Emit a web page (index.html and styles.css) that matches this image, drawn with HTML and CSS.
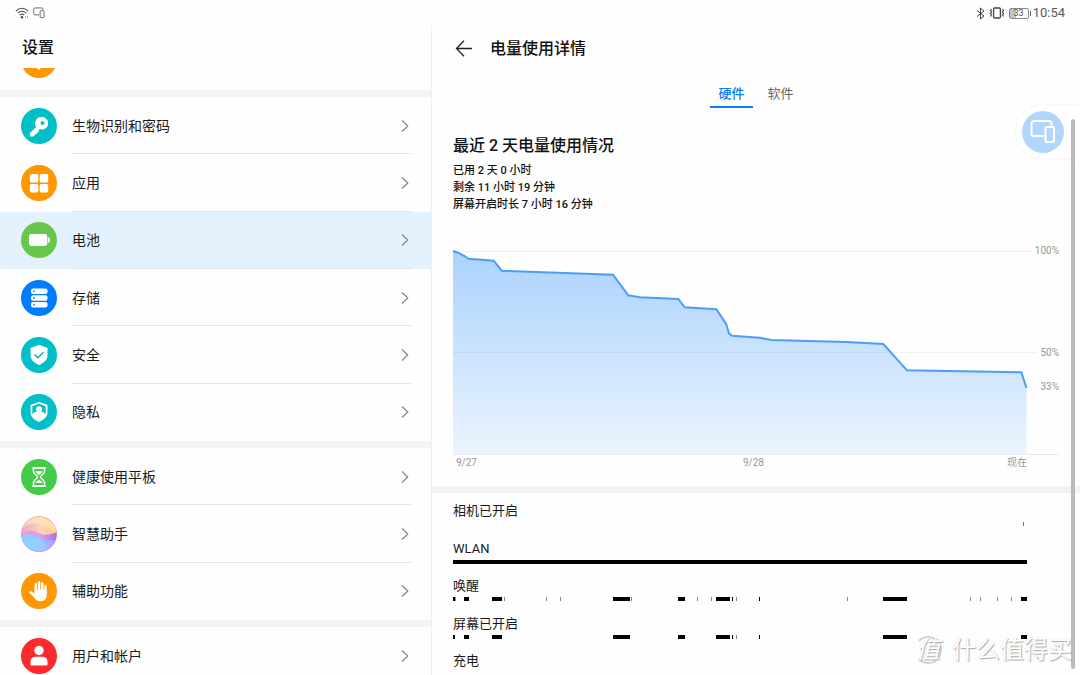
FILE: index.html
```html
<!DOCTYPE html>
<html lang="zh-CN">
<head>
<meta charset="utf-8">
<meta name="viewport" content="width=device-width, initial-scale=1">
<title>设置</title>
<link rel="stylesheet" href="styles.css">
</head>
<body>
<svg class="defs" aria-hidden="true">
  <symbol id="chevron" viewBox="0 0 8 14"><path d="M1 1.5 6.8 7 1 12.5" fill="none" stroke="#858585" stroke-width="1.2"/></symbol>
  <symbol id="devices" viewBox="0 0 26 24"><path d="M21.5 5.500V3.500a2.500 2.500 0 0 0-2.500-2.500H4A2.500 2.500 0 0 0 1.500 3.500v10A2.500 2.500 0 0 0 4 16h9.500M17 7h5.500a1.500 1.500 0 0 1 1.500 1.500v12a1.500 1.500 0 0 1-1.500 1.500H17a1.500 1.500 0 0 1-1.500-1.500v-12A1.500 1.500 0 0 1 17 7z" fill="none" stroke="currentColor"/></symbol>
</svg>

<header class="status">
  <div class="status-side">
    <svg width="14" height="12" viewBox="0 0 14 12"><g fill="none" stroke="#555" stroke-width="1.100"><path d="M.8 4.100Q7-1.600 13.200 4.100M2.800 6.200Q7 2.400 11.200 6.200M4.800 8.200Q7 6.200 9.200 8.200"/></g><circle cx="7" cy="10.300" r="1.200" fill="#444"/><path d="M10.500 9v2M12.500 9v2" stroke="#bbb"/></svg>
    <svg class="mini-devices" width="12" height="12"><use href="#devices"/></svg>
  </div>
  <div class="status-side">
    <svg width="9" height="13" viewBox="0 0 9 13"><path d="M1 3.500 8 9 4.500 12V1L8 4 1 9.500" fill="none" stroke="#444"/></svg>
    <svg width="16" height="12" viewBox="0 0 16 12"><rect x="4.600" y="1" width="6.800" height="10" rx="1" fill="none" stroke="#444" stroke-width="1.300"/><path d="M2.500 2 1.500 3.500l1 1.500-1 1.500 1 1.500-1 1.500M13.500 2l1 1.500-1 1.500 1 1.500-1 1.500 1 1.500" fill="none" stroke="#444" stroke-width="1.200"/></svg>
    <span class="battery"><span class="battery-level">33</span></span>
    <time class="clock">10:54</time>
  </div>
</header>

<div class="panes">
  <nav class="sidebar" aria-label="设置">
    <h1 class="sidebar-title">设置</h1>
    <div class="list">
      <div class="group cut"><svg class="icon" viewBox="0 0 36 36"><circle cx="18" cy="18" r="18" fill="#ff9800"/><path d="M16 26h4l-2 2z" fill="#fff"/></svg></div>
      <div class="group six">
        <a class="item" href="#security"><svg class="icon" viewBox="0 0 36 36"><circle cx="18" cy="18" r="18" fill="#00bfc9"/><path fill="#fff" fill-rule="evenodd" d="M20.500 9a6.200 6.200 0 1 1-1.600 12l-1.300 1.300.3 1.700-1.700.2-.3 1.700-1.700.2-.4 1.500-1.300.8H9.200l-.4-3.200 6.400-6.500A6.200 6.200 0 0 1 20.500 9zm1 4a2 2 0 1 0 0 4 2 2 0 0 0 0-4z"/></svg><span class="label">生物识别和密码</span><svg class="chevron"><use href="#chevron"/></svg></a>
        <a class="item" href="#apps"><svg class="icon" viewBox="0 0 36 36"><circle cx="18" cy="18" r="18" fill="#ff9800"/><g fill="#fff"><rect x="8.800" y="9" width="8.500" height="8.500" rx="1.600"/><rect x="18.700" y="9" width="8.500" height="8.500" rx="1.600"/><rect x="8.800" y="18.900" width="8.500" height="8.500" rx="1.600"/><rect x="18.700" y="18.900" width="8.500" height="8.500" rx="1.600"/></g></svg><span class="label">应用</span><svg class="chevron"><use href="#chevron"/></svg></a>
        <a class="item selected" href="#battery" aria-current="page"><svg class="icon" viewBox="0 0 36 36"><circle cx="18" cy="18" r="18" fill="#66c74c"/><rect x="8" y="12" width="18.300" height="12" rx="2.400" fill="#fff"/><path d="M27 15.200h.8a1 1 0 0 1 1 1v3.600a1 1 0 0 1-1 1H27z" fill="#fff"/></svg><span class="label">电池</span><svg class="chevron"><use href="#chevron"/></svg></a>
        <a class="item" href="#storage"><svg class="icon" viewBox="0 0 36 36"><circle cx="18" cy="18" r="18" fill="#007dff"/><g fill="#fff"><rect x="10" y="8.500" width="16.500" height="5.500" rx="2"/><rect x="10" y="15.300" width="16.500" height="5.500" rx="2"/><rect x="10" y="22.100" width="16.500" height="5.500" rx="2"/></g><g fill="#007dff"><circle cx="13" cy="11.200" r=".9"/><circle cx="13" cy="18" r=".9"/><circle cx="13" cy="24.800" r=".9"/></g></svg><span class="label">存储</span><svg class="chevron"><use href="#chevron"/></svg></a>
        <a class="item" href="#safety"><svg class="icon" viewBox="0 0 36 36"><circle cx="18" cy="18" r="18" fill="#00bfc9"/><path d="M18 7.800 26.500 11v7.500c0 4.500-4 7.500-8.500 9.500-4.500-2-8.500-5-8.500-9.500V11z" fill="#fff"/><path d="m13.500 17.500 3.500 3.300 5.500-5.600" fill="none" stroke="#00a9b3" stroke-width="1.300"/></svg><span class="label">安全</span><svg class="chevron"><use href="#chevron"/></svg></a>
        <a class="item" href="#privacy"><svg class="icon" viewBox="0 0 36 36"><circle cx="18" cy="18" r="18" fill="#00bfc9"/><path d="M18 7.800 26.500 11v7.500c0 4.500-4 7.500-8.500 9.500-4.500-2-8.500-5-8.500-9.500V11z" fill="#fff"/><path d="M18 9.800 24.700 12.200V18l-.2 2.500c-.8-1.600-2.200-2.400-4-2.700h-5c-1.800.3-3.200 1.100-4 2.700l-.2-2.500v-5.800z" fill="#00bfc9"/><circle cx="18" cy="15.300" r="3" fill="#fff"/><path d="M12 23c0-3.500 2.500-4.600 6-4.600s6 1.100 6 4.600z" fill="#fff"/></svg><span class="label">隐私</span><svg class="chevron"><use href="#chevron"/></svg></a>
      </div>
      <div class="group three">
        <a class="item" href="#wellbeing"><svg class="icon" viewBox="0 0 36 36"><circle cx="18" cy="18" r="18" fill="#43cc47"/><path d="M12.500 9h11v3.500c0 2.500-4 3.700-4 5.500s4 3 4 5.500V27h-11v-3.500c0-2.500 4-3.700 4-5.500s-4-3-4-5.500z" fill="none" stroke="#fff" stroke-width="1.500"/><path d="M11.300 8.800h13.400M11.300 27.200h13.400" stroke="#fff" stroke-width="1.800"/><path d="M14.500 12.300h7c-.3 1.600-2.500 2.600-3.500 4-1-1.400-3.200-2.400-3.500-4zM18 20.500c1.500 1.500 3 1.800 3.500 3.500h-7c.5-1.700 2-2 3.500-3.500z" fill="#fff"/></svg><span class="label">健康使用平板</span><svg class="chevron"><use href="#chevron"/></svg></a>
        <a class="item" href="#assistant"><svg class="icon" viewBox="0 0 36 36"><defs><linearGradient id="sky" x2="1"><stop stop-color="#e9a5d5"/><stop offset=".55" stop-color="#ffd3b5"/><stop offset="1" stop-color="#ffc87b"/></linearGradient><linearGradient id="wave" x2="1"><stop stop-color="#f29cc4"/><stop offset=".5" stop-color="#dba0f0"/><stop offset="1" stop-color="#ad6cf0"/></linearGradient><linearGradient id="sea" x2="1"><stop stop-color="#86d4ff"/><stop offset=".5" stop-color="#a3b8ff"/><stop offset="1" stop-color="#aaa2ff"/></linearGradient><clipPath id="orb"><circle cx="18" cy="18" r="17.800"/></clipPath></defs><g clip-path="url(#orb)"><path fill="url(#sky)" d="M0 0h36v36H0z"/><path d="M0 14C8 4 20 5 36 17v-6C26 2 18 0 12 0 6 3 2 7 0 14z" fill="#ffeeb8" opacity=".6"/><path d="M0 18c7-5 13-4 18-1s11 2 18-1v20H0z" fill="url(#wave)"/><path d="M0 20c6-3 12-2 18 1 6 2.500 12 4 18 3v12H0z" fill="url(#sea)"/><path d="M0 29c6-6 12-8 18-7 5 1 8 6 9 14H0z" fill="#8be2ff" opacity=".45"/></g><circle cx="18" cy="18" r="17.500" fill="none" stroke="#c98fae" stroke-opacity=".4"/></svg><span class="label">智慧助手</span><svg class="chevron"><use href="#chevron"/></svg></a>
        <a class="item" href="#accessibility"><svg class="icon" viewBox="0 0 36 36"><circle cx="18" cy="18" r="18" fill="#ff9800"/><path d="M14.800 20V11.200M18.100 18V9.300M21.400 18v-7.500M24.500 20v-6.800" stroke="#fff" stroke-width="2.400" stroke-linecap="round"/><path d="M13.600 16.500h12.100v5.500c0 4-2.300 6.200-6 6.200-3 0-4.700-1.200-6.200-3.300l-5-5.200c-.8-1.100.9-2 1.900-1.300l3.200 2.300z" fill="#fff"/></svg><span class="label">辅助功能</span><svg class="chevron"><use href="#chevron"/></svg></a>
      </div>
      <div class="group">
        <a class="item" href="#users"><svg class="icon" viewBox="0 0 36 36"><circle cx="18" cy="18" r="18" fill="#fa2a2d"/><circle cx="18" cy="12.500" r="4.700" fill="#fff"/><path d="M9.500 26.500v-2.700c0-3.300 2-5 5-5h7c3 0 5 1.700 5 5v2.700a1 1 0 0 1-1 1h-15a1 1 0 0 1-1-1z" fill="#fff"/></svg><span class="label">用户和帐户</span><svg class="chevron"><use href="#chevron"/></svg></a>
      </div>
    </div>
  </nav>

  <main class="detail">
    <div class="detail-head">
      <button class="back" type="button" aria-label="返回"><svg width="18" height="18" viewBox="0 0 18 18"><path d="M17 8.500H1.500M9 .8 1.500 8.500 9 16.200" fill="none" stroke="#222" stroke-width="1.300"/></svg></button>
      <h2 class="detail-title">电量使用详情</h2>
    </div>
    <div class="tabs" role="tablist">
      <button class="tab active" type="button" role="tab" aria-selected="true">硬件</button>
      <button class="tab" type="button" role="tab" aria-selected="false">软件</button>
    </div>
    <section class="usage">
      <h3 class="usage-title">最近 2 天电量使用情况</h3>
      <p class="usage-line">已用 2 天 0 小时</p>
      <p class="usage-line">剩余 11 小时 19 分钟</p>
      <p class="usage-line">屏幕开启时长 7 小时 16 分钟</p>
      <div class="chart">
        <div class="level full"><span>100%</span></div>
        <div class="level half"><span>50%</span></div>
        <div class="level now"><span>33%</span></div>
        <svg class="plot" viewBox="0 0 574 203" preserveAspectRatio="none" role="img" aria-label="电量曲线">
          <defs><linearGradient id="fill" x2="0" y2="1"><stop stop-color="#0a7dfc" stop-opacity=".34"/><stop offset="1" stop-color="#0a7dfc" stop-opacity=".08"/></linearGradient></defs>
          <path fill="url(#fill)" d="M0 0 5 1.700 12 5.300 15.300 7.700 40.700 9.700 48.700 19.700 160 23.700 175.300 44.300 186.700 46.300 225.300 48 231.700 56.300 263.300 58.300 273.300 73.300 276 82.700 279 84.700 306.700 86.800 318.300 89 393.300 91 430.300 93 454 119.300 568.300 121.300 573.500 137V203H0z"/>
          <path class="curve" d="M0 0 5 1.700 12 5.300 15.300 7.700 40.700 9.700 48.700 19.700 160 23.700 175.300 44.300 186.700 46.300 225.300 48 231.700 56.300 263.300 58.300 273.300 73.300 276 82.700 279 84.700 306.700 86.800 318.300 89 393.300 91 430.300 93 454 119.300 568.300 121.300 573.500 137"/>
        </svg>
      </div>
      <div class="dates"><span>9/27</span><span>9/28</span><span>现在</span></div>
    </section>
    <section class="events">
      <div class="event"><span class="event-name">相机已开启</span><svg class="track" viewBox="0 0 574 4" preserveAspectRatio="none"><path d="M570 0h1v4h-1z" fill="#777"/></svg></div>
      <div class="event"><span class="event-name">WLAN</span><svg class="track" viewBox="0 0 574 4" preserveAspectRatio="none"><path d="M0 0h574v4H0z"/></svg></div>
      <div class="event"><span class="event-name">唤醒</span><svg class="track" viewBox="0 0 574 4" preserveAspectRatio="none"><path d="M0 0h2v4H0zM11 0h5v4h-5zM39 0h10v4H39zM160 0h17v4h-17zM225 0h7v4h-7zM263 0h14v4h-14zM279 0h1v4h-1zM306 0h1v4h-1zM430 0h24v4h-24zM568 0h6v4h-6z"/><path fill="#888" d="M2 0h1v4H2zM51 0h1v4h-1zM93 0h1v4h-1zM107 0h1v4h-1zM178 0h1v4h-1zM244 0h1v4h-1zM258 0h1v4h-1zM283 0h1v4h-1zM394 0h1v4h-1zM517 0h1v4h-1zM527 0h1v4h-1zM544 0h1v4h-1zM558 0h1v4h-1z"/></svg></div>
      <div class="event"><span class="event-name">屏幕已开启</span><svg class="track" viewBox="0 0 574 4" preserveAspectRatio="none"><path d="M0 0h2v4H0zM11 0h5v4h-5zM39 0h10v4H39zM160 0h17v4h-17zM225 0h7v4h-7zM263 0h14v4h-14zM279 0h1v4h-1zM306 0h1v4h-1zM430 0h24v4h-24zM568 0h6v4h-6z"/><path fill="#888" d="M283 0h1v4h-1z"/></svg></div>
      <div class="event"><span class="event-name">充电</span></div>
    </section>
  </main>
</div>

<div class="dock"><button class="dock-button" type="button" aria-label="多设备协同"><svg width="26" height="24"><use href="#devices"/></svg></button></div>
<div class="scrollbar"></div>
<div class="watermark"><span class="seal">值</span><span>什么值得买</span></div>
</body>
</html>
```

FILE: styles.css
```css
* { box-sizing: border-box; }

body {
  margin: 0;
  height: 100vh;
  display: flex;
  flex-direction: column;
  overflow: hidden;
  position: relative;
  background: #fefefe;
  color: #1a1a1a;
  font-family: Roboto, "Noto Sans CJK SC", sans-serif;
  font-size: 14px;
}

h1, h2, h3, p { margin: 0; font-weight: 500; }
button { border: 0; padding: 0; background: none; font: inherit; }
svg { display: block; flex: none; }
.defs { position: absolute; width: 0; height: 0; }

.status {
  flex: none;
  height: 26px;
  padding: 0 15px;
  display: flex;
  justify-content: space-between;
  align-items: center;
}
.status-side { display: flex; align-items: center; gap: 4px; }
.mini-devices { color: #666; stroke-width: 2px; }
.battery {
  position: relative;
  width: 20px;
  height: 11px;
  border: 1px solid #888;
  border-radius: 2px;
  background: linear-gradient(90deg, #c4c4c4 35%, #fff 35%);
  display: flex;
  justify-content: center;
  align-items: center;
}
.battery::after {
  content: "";
  position: absolute;
  right: -3px;
  top: 2px;
  width: 1px;
  height: 5px;
  background: #666;
}
.battery-level { font-size: 9px; line-height: 9px; color: #555; }
.clock { font-size: 13px; line-height: 20px; color: #5a5a5a; }

.panes {
  flex: 1;
  min-height: 0;
  display: grid;
  grid-template-columns: 2fr 3fr;
}

.sidebar {
  min-height: 0;
  overflow: hidden;
  border-right: 1px solid #f0f0f0;
}
.sidebar-title {
  padding: 10px 22px 8px;
  font-size: 16px;
  line-height: 24px;
  color: #111;
}
.group { display: grid; grid-auto-rows: 1fr; border-bottom: 7px solid #f4f4f4; }
.group:last-child { border-bottom: 0; }
.cut {
  height: 29px;
  padding: 0 21px 12px;
  align-content: end;
  grid-auto-rows: auto;
  overflow: hidden;
}
.six { min-height: 351px; }
.three { min-height: 179px; }
.item {
  position: relative;
  min-height: 57px;
  padding: 0 22px 0 21px;
  display: flex;
  align-items: center;
  color: #1a1a1a;
  text-decoration: none;
}
.item:not(:last-child)::after {
  content: "";
  position: absolute;
  left: 72px;
  right: 20px;
  bottom: 0;
  height: 1px;
  background: #e2e2e2;
}
.selected { background: #e3f2fd; }
.icon { width: 36px; height: 36px; }
.label { flex: 1; padding-left: 15px; line-height: 20px; }
.chevron { width: 8px; height: 14px; }

.detail { min-width: 0; }
.detail-head { height: 45px; padding-left: 23px; display: flex; align-items: center; gap: 17px; }
.detail-title { font-size: 16px; line-height: 24px; color: #111; }
.tabs { display: flex; justify-content: center; gap: 7px; padding-top: 9px; }
.tab {
  padding: 4px 8px 2px;
  border-bottom: 2px solid transparent;
  font-size: 13px;
  line-height: 20px;
  color: #666;
}
.active { color: #0a7df0; border-color: #0a7df0; font-weight: 500; }

.usage { padding: 26px 21px 15px; border-bottom: 7px solid #f2f2f2; }
.usage-title { margin-bottom: 4px; font-size: 16px; line-height: 24px; color: #111; }
.usage-line { font-size: 11px; line-height: 17px; color: #111; }
.chart {
  position: relative;
  height: 204px;
  margin-top: 38px;
  padding-right: 32px;
  border-bottom: 1px solid #e6eaee;
}
.plot { position: relative; width: 100%; height: 203px; overflow: visible; }
.curve { fill: none; stroke: #4a9ff5; stroke-width: 2px; vector-effect: non-scaling-stroke; }
.level {
  position: absolute;
  left: 0;
  right: 0;
  height: 12px;
  margin-top: -6px;
  display: flex;
  align-items: center;
  gap: 3px;
  font-size: 10px;
  line-height: 12px;
  color: #999;
}
.level::before { content: ""; flex: 1; height: 1px; background: #f0f0f0; }
.full { top: 0; }
.half { top: 50%; }
.now { top: 67%; }
.now::before { background: none; }
.dates {
  margin-right: 32px;
  display: grid;
  grid-template-columns: 1fr 1fr auto;
  grid-template-columns: 50% 1fr auto;
  font-size: 10px;
  line-height: 16px;
  color: #999;
}
.dates span { padding-left: 3px; }

.events {
  min-height: 196px;
  padding: 8px 53px 0 21px;
  display: grid;
  grid-auto-rows: 1fr;
}
.event-name { display: block; font-size: 13px; line-height: 20px; }
.track { width: 100%; height: 4px; margin-top: 1px; }

.dock {
  position: absolute;
  right: 0;
  top: 105px;
  padding: 6px 16px 6px 6px;
  border-radius: 27px 0 0 27px;
  background: #fff;
  box-shadow: 0 0 3px #00000012;
}
.dock-button {
  width: 42px;
  height: 42px;
  border-radius: 50%;
  background: #b2d5fc;
  color: #fff;
  display: grid;
  place-items: center;
  stroke-width: 2px;
}
.scrollbar {
  position: absolute;
  right: 5px;
  top: 119px;
  bottom: 6px;
  width: 4px;
  border-radius: 2px;
  background: #bababa;
}
.watermark {
  position: absolute;
  right: 8px;
  bottom: 9px;
  display: flex;
  align-items: center;
  gap: 10px;
  font-size: 24px;
  line-height: 32px;
  color: #fff;
  text-shadow: 1px 1px 1px #aaa, 0 0 1px #ccc;
}
.seal {
  width: 28px;
  height: 28px;
  border: 2px solid #d4d4d4;
  border-left-color: transparent;
  border-radius: 50%;
  font-size: 24px;
  font-style: italic;
  line-height: 24px;
  display: flex;
  justify-content: center;
}
```
